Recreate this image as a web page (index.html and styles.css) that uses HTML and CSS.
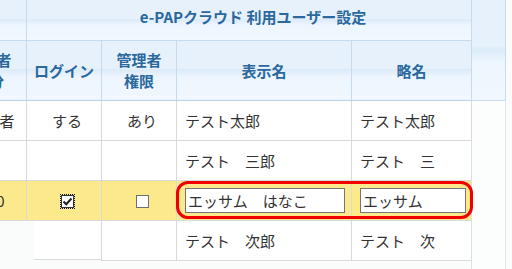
FILE: index.html
```html
<!DOCTYPE html>
<html lang="ja">

<head>
    <meta charset="UTF-8" />
    <meta name="viewport" content="width=device-width, initial-scale=1.0" />
    <title>利用ユーザー設定</title>
    <link rel="stylesheet" href="styles.css">
</head>

<body>
    <table class="users">
        <colgroup>
            <col class="c-role">
            <col class="c-login">
            <col class="c-admin">
            <col class="c-name">
            <col class="c-short">
            <col class="c-side">
        </colgroup>
        <tr class="head-top">
            <th></th>
            <th colspan="4" class="title">e-PAPクラウド 利用ユーザー設定</th>
            <th rowspan="2" class="side-head"></th>
        </tr>
        <tr class="head-cols">
            <th>利用者<br>区分</th>
            <th>ログイン</th>
            <th>管理者<br>権限</th>
            <th>表示名</th>
            <th>略名</th>
        </tr>
        <tr>
            <td class="mid">管理者</td>
            <td class="mid">する</td>
            <td class="mid">あり</td>
            <td>テスト太郎</td>
            <td>テスト太郎</td>
            <td rowspan="5" class="side"></td>
        </tr>
        <tr>
            <td class="mid"></td>
            <td class="mid"></td>
            <td class="mid"></td>
            <td>テスト　三郎</td>
            <td>テスト　三</td>
        </tr>
        <tr class="editing">
            <td class="mid">100</td>
            <td class="mid"><span class="chk on"><svg width="11" height="11" viewBox="0 0 11 11"><path d="M1.5 5.5 L4.2 8.2 L9.5 2.5" fill="none" stroke="#222" stroke-width="2"/></svg></span></td>
            <td class="mid"><span class="chk"></span></td>
            <td class="anchor">
                <input class="field wide" type="text" value="エッサム　はなこ">
                <div class="ring"></div>
            </td>
            <td><input class="field narrow" type="text" value="エッサム"></td>
        </tr>
        <tr class="last">
            <td class="gap"></td>
            <td class="mid first"></td>
            <td class="mid"></td>
            <td>テスト　次郎</td>
            <td>テスト　次</td>
        </tr>
        <tr class="tail">
            <td></td>
            <td></td>
            <td></td>
            <td></td>
            <td></td>
        </tr>
    </table>
</body>

</html>
```

FILE: styles.css
```css
body {
    margin: 0;
    background-color: #fafbfb;
    font-family: "Noto Sans CJK JP", "Noto Sans", sans-serif;
    overflow: hidden;
}

.users {
    border-collapse: collapse;
    table-layout: fixed;
    width: 554px;
    margin-left: -49px;
}

.c-role,
.c-login,
.c-admin {
    width: 75px;
}

.c-name {
    width: 175px;
}

.c-short {
    width: 120px;
}

.c-side {
    width: 34px;
}

/* header */
.users th {
    color: #2b689d;
    font-size: 15px;
    font-weight: bold;
    line-height: 21px;
    border: 1px solid #c6dbee;
    border-top: none;
    background: linear-gradient(#e6f1fc 0%, #e6f1fc 46%, #dcebf8 50%, #edf5fe 62%, #f0f7fe 100%);
    padding: 0;
}

.head-top {
    height: 40px;
}

.head-top .title {
    padding-bottom: 6px;
    padding-left: 8px;
}

.head-cols {
    height: 60px;
}

.head-cols th {
    border-bottom-color: #bed4e9;
}

.side-head {
    border-right-color: #c9dbeb;
}

/* body */
.users td {
    height: 39px;
    font-size: 15px;
    color: #333;
    background-color: #fff;
    border: 1px solid #dadada;
    padding: 0 0 0 8px;
    white-space: nowrap;
}

.users td.mid {
    text-align: center;
    padding-left: 6px;
}

.users td.side {
    background-color: #fcfdfd;
    border-left: 1px solid #dde0e2;
    border-right: 1px solid #e3e7e9;
    border-bottom: none;
}

.editing td {
    background-color: #fce98c;
}

.last td.gap {
    background-color: transparent;
    border: none;
}

.last td.first {
    border-left: none;
    border-bottom: none;
    background: linear-gradient(#dadada, #dadada) left 7px bottom / 100% 1px no-repeat,
        linear-gradient(to right, transparent 7px, #fff 7px);
}

.tail td {
    background-color: transparent;
    border: none;
    height: 20px;
}

/* checkboxes */
.chk {
    display: inline-block;
    width: 13px;
    height: 13px;
    box-sizing: border-box;
    border: 1px solid #707070;
    background-color: #fff;
    vertical-align: middle;
    position: relative;
    top: -1px;
}

.chk.on {
    border-color: #333;
    outline: 1px dotted #111;
    outline-offset: 0;
}

.chk svg {
    display: block;
}

/* edit fields */
.field {
    display: block;
    box-sizing: border-box;
    height: 25px;
    border: 1px solid #767676;
    background-color: #fff;
    font-family: "Noto Sans CJK JP", sans-serif;
    font-size: 15px;
    color: #333;
    padding: 0 2px;
    margin: 0;
    border-radius: 0;
    outline: none;
}

.wide {
    width: 160px;
}

.narrow {
    width: 106px;
}

.anchor {
    position: relative;
}

.ring {
    position: absolute;
    left: -1px;
    top: 0;
    width: 297px;
    height: 38px;
    box-sizing: border-box;
    border: 3px solid #f20000;
    border-radius: 12px;
    pointer-events: none;
}
```
